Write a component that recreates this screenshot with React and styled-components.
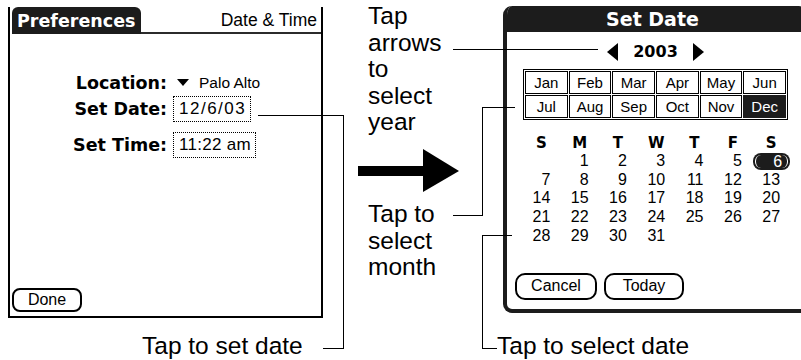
import React from "react";
import styled, { createGlobalStyle } from "styled-components";

const GlobalStyle = createGlobalStyle`
  html, body { margin: 0; padding: 0; background: #ffffff; }
  body { overflow: hidden; }
`;

const BOLD = `"DejaVu Sans", "Liberation Sans", sans-serif`;
const REG = `"Liberation Sans", Arial, sans-serif`;
const DARK = "#1c1c1c";

const Page = styled.div`
  position: relative;
  width: 801px;
  height: 360px;
  overflow: hidden;
  display: grid;
  grid-template-columns: 358px 139px 1fr;
  background: #fff;
  color: #000;
`;

const Column = styled.div`
  display: flex;
  flex-direction: column;
  align-items: flex-start;
  min-width: 0;
  padding-top: ${(p) => p.$top}px;
`;

/* ---------- left: Palm preferences screen ---------- */
const Frame = styled.div`
  margin-left: 8px;
  width: 315px;
  height: 311px;
  box-sizing: border-box;
  border: 2px solid #000;
  border-top: 0;
  display: flex;
  flex-direction: column;
  align-items: stretch;
`;

const FrameHeader = styled.div`
  display: flex;
  height: 27px;
`;

const Tab = styled.div`
  margin-left: 2px;
  width: 129px;
  box-sizing: border-box;
  padding: 2px 0 0 5px;
  background: ${DARK};
  color: #fff;
  border-radius: 6px 6px 0 0;
  font: bold 17.5px/25px ${BOLD};
  white-space: nowrap;
`;

const HeaderTitle = styled.div`
  flex: 1;
  box-sizing: border-box;
  padding: 2px 4px 0 0;
  border-bottom: 2px solid #2b2b2b;
  text-align: right;
  font: 17.5px/23px ${REG};
  white-space: nowrap;
`;

const FormRow = styled.div`
  display: grid;
  grid-template-columns: 157px auto;
  column-gap: 6px;
  align-items: center;
  justify-content: start;
  height: 26px;
  margin-top: ${(p) => p.$space || 0}px;
`;

const FieldLabel = styled.div`
  text-align: right;
  font: bold 17.5px/26px ${BOLD};
  white-space: nowrap;
`;

const PopTrigger = styled.div`
  display: flex;
  align-items: center;
  gap: 10px;
  padding-left: 4px;
  font: 15.5px/26px ${REG};
  white-space: nowrap;
`;

const ValueBox = styled.div`
  height: 26px;
  box-sizing: border-box;
  padding: 0 4px 0 5px;
  border: 1px dotted #000;
  font: 17px/24px ${REG};
  letter-spacing: ${(p) => p.$spacing || 0}px;
  white-space: nowrap;
`;

const RoundButton = styled.div`
  box-sizing: border-box;
  width: ${(p) => p.$w}px;
  height: ${(p) => p.$h}px;
  border: 2px solid #000;
  border-radius: ${(p) => p.$r}px;
  display: flex;
  align-items: center;
  justify-content: center;
  font: 16px/1 ${REG};
  background: #fff;
`;

const DoneButton = styled(RoundButton)`
  margin: auto 0 4px 2px;
`;

const Caption = styled.div`
  margin-top: ${(p) => p.$mt}px;
  margin-left: ${(p) => p.$ml || 0}px;
  font: 24.5px/26.5px ${REG};
  white-space: nowrap;
`;

/* ---------- middle: callouts ---------- */
const Callout = styled.div`
  margin-left: 10px;
  margin-top: ${(p) => p.$mt || 0}px;
  width: 86px;
  font: 24.5px/26.5px ${REG};
`;

const BigArrow = styled.svg`
  display: block;
  margin-top: 13.5px;
`;

/* ---------- right: Set Date dialog ---------- */
const Dialog = styled.div`
  margin-left: 6px;
  width: 305px;
  height: 307px;
  box-sizing: border-box;
  border: 4px solid ${DARK};
  border-top: 0;
  border-radius: 9px 9px 0 9px;
  overflow: hidden;
  background: #fff;
  display: flex;
  flex-direction: column;
  align-items: flex-start;
`;

const DialogTitle = styled.div`
  align-self: stretch;
  height: 26px;
  box-sizing: border-box;
  padding: 1px 6px 0 0;
  background: ${DARK};
  color: #fff;
  text-align: center;
  font: bold 19px/25px ${BOLD};
`;

const YearRow = styled.div`
  align-self: stretch;
  height: 34px;
  padding-top: 3px;
  display: flex;
  align-items: center;
  justify-content: center;
  gap: 15px;
`;

const YearText = styled.span`
  font: bold 16px/16px ${BOLD};
`;

const MonthGrid = styled.div`
  margin-left: 16px;
  width: 265px;
  box-sizing: border-box;
  display: grid;
  grid-template-columns: repeat(6, 1fr);
  grid-auto-rows: 23px;
  gap: 1px;
  padding: 1px;
  border: 1px solid #000;
`;

const MonthCell = styled.div`
  border: 1px solid #000;
  display: flex;
  align-items: center;
  justify-content: center;
  font: 15px/1 ${REG};
  background: ${(p) => (p.$selected ? DARK : "#fff")};
  color: ${(p) => (p.$selected ? "#fff" : "#000")};
  border-color: ${(p) => (p.$selected ? DARK : "#000")};
`;

const DayGrid = styled.div`
  margin: 15px 0 0 5px;
  display: grid;
  grid-template-columns: repeat(7, 38.3px);
  grid-template-rows: 17px repeat(5, 18.7px);
`;

const DayHead = styled.div`
  justify-self: end;
  width: 18px;
  text-align: center;
  font: bold 15px/17px ${BOLD};
`;

const Day = styled.div`
  display: flex;
  align-items: center;
  justify-content: flex-end;
  font: 16px/18.7px ${REG};
`;

const Pill = styled.span`
  display: flex;
  margin-right: -10px;
  padding: 2px;
  background: ${DARK};
  border-radius: 8px;
`;

const PillInner = styled.span`
  display: flex;
  align-items: center;
  height: 13px;
  padding: 0 5px 0 17px;
  border-left: 1.5px solid #fff;
  border-right: 1.5px solid #fff;
  border-radius: 6px;
  color: #fff;
  font: 16px/13px ${REG};
`;

const ButtonRow = styled.div`
  display: flex;
  gap: 7px;
  margin: 27.5px 0 0 8px;
`;

const Leaders = styled.svg`
  position: absolute;
  left: 0;
  top: 0;
  pointer-events: none;
`;

const months = ["Jan", "Feb", "Mar", "Apr", "May", "Jun", "Jul", "Aug", "Sep", "Oct", "Nov", "Dec"];
const weekdays = ["S", "M", "T", "W", "T", "F", "S"];
const days = [null];
for (let d = 1; d <= 31; d++) days.push(d);

function Triangle({ dir }) {
  const pts = dir === "left" ? "11,0 11,18 0,9" : "0,0 0,18 11,9";
  return (
    <svg width="11" height="18" viewBox="0 0 11 18">
      <polygon points={pts} fill="#000" />
    </svg>
  );
}

export default function App() {
  return (
    <>
      <GlobalStyle />
      <Page>
        <Column $top={7}>
          <Frame>
            <FrameHeader>
              <Tab>Preferences</Tab>
              <HeaderTitle>Date &amp; Time</HeaderTitle>
            </FrameHeader>
            <FormRow $space={35.5}>
              <FieldLabel>Location:</FieldLabel>
              <PopTrigger>
                <svg width="12" height="7" viewBox="0 0 12 7">
                  <polygon points="0,0 12,0 6,7" fill="#000" />
                </svg>
                Palo Alto
              </PopTrigger>
            </FormRow>
            <FormRow>
              <FieldLabel>Set Date:</FieldLabel>
              <ValueBox $spacing={1.5}>12/6/03</ValueBox>
            </FormRow>
            <FormRow $space={10}>
              <FieldLabel>Set Time:</FieldLabel>
              <ValueBox $spacing={0.3}>11:22 am</ValueBox>
            </FormRow>
            <DoneButton $w={70} $h={24} $r={8}>Done</DoneButton>
          </Frame>
          <Caption $mt={15.3} $ml={142}>Tap to set date</Caption>
        </Column>

        <Column $top={3}>
          <Callout>Tap arrows to select year</Callout>
          <BigArrow width="102" height="44" viewBox="0 0 102 44">
            <rect x="0" y="17" width="67" height="10" fill="#000" />
            <polygon points="65,0 101,22 65,43" fill="#000" />
          </BigArrow>
          <Callout $mt={8}>Tap to select month</Callout>
        </Column>

        <Column $top={6}>
          <Dialog>
            <DialogTitle>Set Date</DialogTitle>
            <YearRow>
              <Triangle dir="left" />
              <YearText>2003</YearText>
              <Triangle dir="right" />
            </YearRow>
            <MonthGrid>
              {months.map((m) => (
                <MonthCell key={m} $selected={m === "Dec"}>{m}</MonthCell>
              ))}
            </MonthGrid>
            <DayGrid>
              {weekdays.map((w, i) => (
                <DayHead key={"w" + i}>{w}</DayHead>
              ))}
              {days.map((d, i) => (
                <Day key={"d" + i}>
                  {d === 6 ? (
                    <Pill>
                      <PillInner>6</PillInner>
                    </Pill>
                  ) : (
                    d
                  )}
                </Day>
              ))}
            </DayGrid>
            <ButtonRow>
              <RoundButton $w={82} $h={27} $r={10}>Cancel</RoundButton>
              <RoundButton $w={80} $h={27} $r={10}>Today</RoundButton>
            </ButtonRow>
          </Dialog>
          <Caption $mt={20.3}>Tap to select date</Caption>
        </Column>

        <Leaders width="801" height="360" viewBox="0 0 801 360">
          <g fill="none" stroke="#000" strokeWidth="1" shapeRendering="crispEdges">
            <path d="M453 49.5 H598" />
            <path d="M453 215.5 H482.5 V107.5 H515" />
            <path d="M512 235.5 H482.5 V348.5 H497" />
            <path d="M258 115.5 H343.5 V348.5 H323" />
          </g>
        </Leaders>
      </Page>
    </>
  );
}
